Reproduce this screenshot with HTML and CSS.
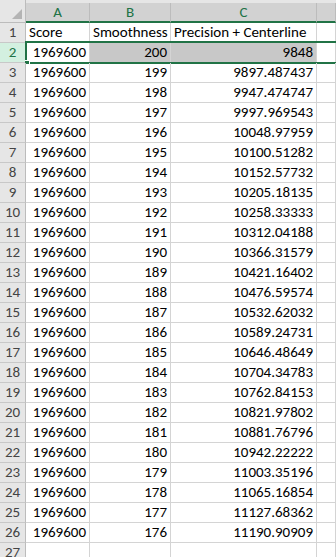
FILE: index.html
```html
<!DOCTYPE html>
<html lang="en">
<head>
  <meta charset="UTF-8" />
  <title>Sheet1</title>
  <link rel="stylesheet" href="styles.css">
</head>
<body>

  <div class="sheet">

    <div class="row row--head">
      <div class="corner"><span class="corner-mark"></span></div>
      <div class="col-head">A</div>
      <div class="col-head">B</div>
      <div class="col-head">C</div>
      <div class="col-head"></div>
    </div>

    <div class="row">
      <div class="row-head">1</div>
      <div class="cell">Score</div>
      <div class="cell">Smoothness</div>
      <div class="cell">Precision + Centerline</div>
      <div class="cell"></div>
    </div>

    <div class="row row--selected">
      <div class="row-head">2</div>
      <div class="cell num">1969600</div>
      <div class="cell num shaded">200</div>
      <div class="cell num shaded">9848</div>
      <div class="cell"></div>
      <div class="selection"><span class="fill-handle"></span></div>
    </div>

    <div class="row"><div class="row-head">3</div><div class="cell num">1969600</div><div class="cell num">199</div><div class="cell num">9897.487437</div><div class="cell"></div></div>
    <div class="row"><div class="row-head">4</div><div class="cell num">1969600</div><div class="cell num">198</div><div class="cell num">9947.474747</div><div class="cell"></div></div>
    <div class="row"><div class="row-head">5</div><div class="cell num">1969600</div><div class="cell num">197</div><div class="cell num">9997.969543</div><div class="cell"></div></div>
    <div class="row"><div class="row-head">6</div><div class="cell num">1969600</div><div class="cell num">196</div><div class="cell num">10048.97959</div><div class="cell"></div></div>
    <div class="row"><div class="row-head">7</div><div class="cell num">1969600</div><div class="cell num">195</div><div class="cell num">10100.51282</div><div class="cell"></div></div>
    <div class="row"><div class="row-head">8</div><div class="cell num">1969600</div><div class="cell num">194</div><div class="cell num">10152.57732</div><div class="cell"></div></div>
    <div class="row"><div class="row-head">9</div><div class="cell num">1969600</div><div class="cell num">193</div><div class="cell num">10205.18135</div><div class="cell"></div></div>
    <div class="row"><div class="row-head">10</div><div class="cell num">1969600</div><div class="cell num">192</div><div class="cell num">10258.33333</div><div class="cell"></div></div>
    <div class="row"><div class="row-head">11</div><div class="cell num">1969600</div><div class="cell num">191</div><div class="cell num">10312.04188</div><div class="cell"></div></div>
    <div class="row"><div class="row-head">12</div><div class="cell num">1969600</div><div class="cell num">190</div><div class="cell num">10366.31579</div><div class="cell"></div></div>
    <div class="row"><div class="row-head">13</div><div class="cell num">1969600</div><div class="cell num">189</div><div class="cell num">10421.16402</div><div class="cell"></div></div>
    <div class="row"><div class="row-head">14</div><div class="cell num">1969600</div><div class="cell num">188</div><div class="cell num">10476.59574</div><div class="cell"></div></div>
    <div class="row"><div class="row-head">15</div><div class="cell num">1969600</div><div class="cell num">187</div><div class="cell num">10532.62032</div><div class="cell"></div></div>
    <div class="row"><div class="row-head">16</div><div class="cell num">1969600</div><div class="cell num">186</div><div class="cell num">10589.24731</div><div class="cell"></div></div>
    <div class="row"><div class="row-head">17</div><div class="cell num">1969600</div><div class="cell num">185</div><div class="cell num">10646.48649</div><div class="cell"></div></div>
    <div class="row"><div class="row-head">18</div><div class="cell num">1969600</div><div class="cell num">184</div><div class="cell num">10704.34783</div><div class="cell"></div></div>
    <div class="row"><div class="row-head">19</div><div class="cell num">1969600</div><div class="cell num">183</div><div class="cell num">10762.84153</div><div class="cell"></div></div>
    <div class="row"><div class="row-head">20</div><div class="cell num">1969600</div><div class="cell num">182</div><div class="cell num">10821.97802</div><div class="cell"></div></div>
    <div class="row"><div class="row-head">21</div><div class="cell num">1969600</div><div class="cell num">181</div><div class="cell num">10881.76796</div><div class="cell"></div></div>
    <div class="row"><div class="row-head">22</div><div class="cell num">1969600</div><div class="cell num">180</div><div class="cell num">10942.22222</div><div class="cell"></div></div>
    <div class="row"><div class="row-head">23</div><div class="cell num">1969600</div><div class="cell num">179</div><div class="cell num">11003.35196</div><div class="cell"></div></div>
    <div class="row"><div class="row-head">24</div><div class="cell num">1969600</div><div class="cell num">178</div><div class="cell num">11065.16854</div><div class="cell"></div></div>
    <div class="row"><div class="row-head">25</div><div class="cell num">1969600</div><div class="cell num">177</div><div class="cell num">11127.68362</div><div class="cell"></div></div>
    <div class="row"><div class="row-head">26</div><div class="cell num">1969600</div><div class="cell num">176</div><div class="cell num">11190.90909</div><div class="cell"></div></div>
    <div class="row"><div class="row-head">27</div><div class="cell"></div><div class="cell"></div><div class="cell"></div><div class="cell"></div></div>

  </div>

</body>
</html>
```

FILE: styles.css
```css
* {
  box-sizing: border-box;
}

html, body {
  margin: 0;
  padding: 0;
  background-color: #fff;
  overflow: hidden;
}

body {
  font-family: 'Carlito', 'Lato', sans-serif;
  font-size: 15px;
  color: #000;
}

.sheet {
  width: 336px;
}

.row {
  position: relative;
  display: grid;
  grid-template-columns: 26px 64px 81px 146px 1fr;
  height: 20px;
}

/* column header strip */
.row--head {
  height: 23px;
  background-color: #e6e6e6;
  padding-top: 3px;
}

.corner {
  position: relative;
  margin-top: -3px;
  background-color: #e6e6e6;
  border-right: 1px solid #bcbcbc;
  border-bottom: 1px solid #bcbcbc;
}

.corner-mark {
  position: absolute;
  right: 3px;
  bottom: 3px;
  width: 0;
  height: 0;
  border-left: 10px solid transparent;
  border-bottom: 10px solid #b4b4b4;
}

.col-head {
  background-color: #d2d2d2;
  border-right: 1px solid #bcbcbc;
  border-bottom: 2px solid #217346;
  color: #217346;
  text-align: center;
  line-height: 18px;
  font-size: 15px;
}

.row-head {
  background-color: #e6e6e6;
  border-right: 1px solid #bcbcbc;
  border-bottom: 1px solid #c8c8c8;
  color: #444;
  text-align: center;
  line-height: 19px;
}

.cell {
  border-right: 1px solid #d4d4d4;
  border-bottom: 1px solid #d4d4d4;
  padding: 0 3px;
  line-height: 19px;
  white-space: nowrap;
  overflow: hidden;
}

.num {
  text-align: right;
}

.shaded {
  background-color: #c8c8c8;
}

.row--selected .row-head {
  background-color: #d3f0e0;
  color: #217346;
  border-right-color: #217346;
}

/* green range outline over row 2 */
.selection {
  position: absolute;
  top: -2px;
  left: 25px;
  right: -4px;
  height: 23px;
  border: 2px solid #217346;
  pointer-events: none;
}

.fill-handle {
  position: absolute;
  left: -2px;
  bottom: -3px;
  width: 5px;
  height: 5px;
  background-color: #217346;
  border: 1px solid #fff;
  border-left: none;
}
```
